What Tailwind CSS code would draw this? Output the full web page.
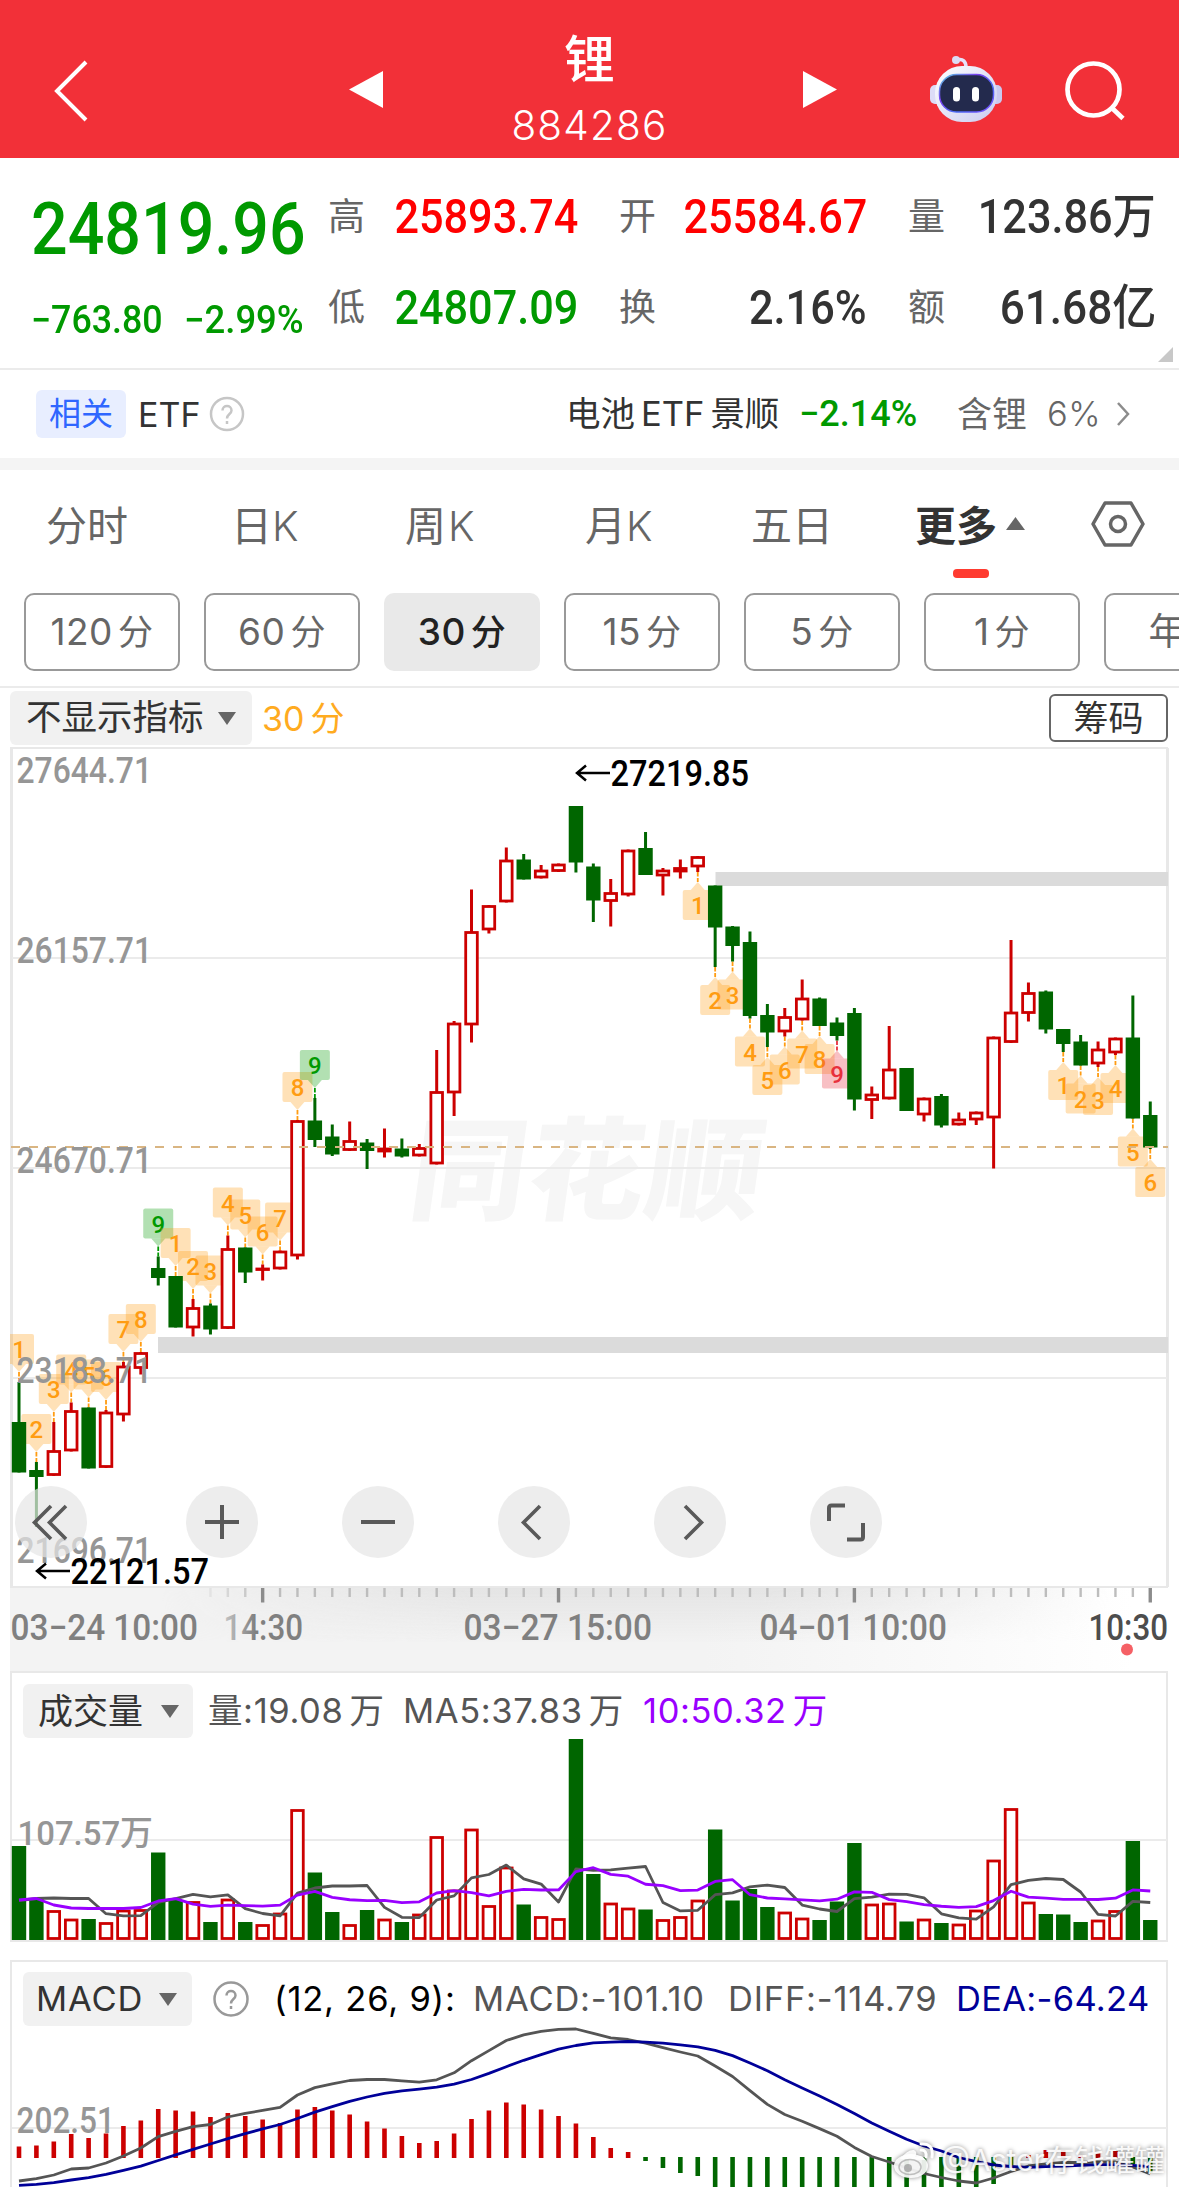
<!DOCTYPE html>
<html lang="zh-CN">

<head>
    <meta charset="UTF-8">
    <meta name="viewport" content="width=device-width, initial-scale=1.0">
    <title>锂 884286</title>
    <script src="https://cdn.jsdelivr.net/npm/@tailwindcss/browser@4"></script>
    <style>
        body {
            font-family: Inter, 'Noto Sans CJK SC', sans-serif;
        }

        .din {
            font-family: Roboto, 'Noto Sans CJK SC', sans-serif;
        }
    </style>
</head>

<body class="w-[1179px] h-[2187px] overflow-hidden bg-white text-[#333] relative">
    <header class="h-[158px] bg-[#f23038] text-white grid grid-cols-[349px_34px_413px_7px_34px_342px]">
        <svg class="w-[120px] h-[158px]" viewBox="0 0 120 158" fill="none" stroke="white" stroke-width="4">
            <path d="M86 62L57 91l29 29" />
        </svg>
        <svg class="w-[34px] h-[158px]" viewBox="0 0 34 158" fill="white">
            <path d="M0 89.500L34 71v37z" />
        </svg>
        <div class="flex flex-col items-center">
            <h1 class="mt-[25px] text-[51px] leading-[70px] font-medium">锂</h1>
            <p class="mt-[6px] text-[40.500px] leading-[50px] font-light tracking-[1.2px]">884286</p>
        </div>
        <span></span>
        <svg class="w-[34px] h-[158px]" viewBox="0 0 34 158" fill="white">
            <path d="M34 89.500L0 71v37z" />
        </svg>
        <svg class="w-[342px] h-[158px]" viewBox="837 0 342 158" fill="none">
            <defs>
                <linearGradient id="shell" x1="0" y1="0" x2="1" y2="1">
                    <stop offset="0" stop-color="#ffffff" />
                    <stop offset="1" stop-color="#c9cbf0" />
                </linearGradient>
                <linearGradient id="rim" x1="0" y1="0" x2="1" y2="1">
                    <stop offset="0" stop-color="#58d6e0" />
                    <stop offset=".35" stop-color="#7a3ff0" />
                    <stop offset=".65" stop-color="#4a6cf5" />
                    <stop offset="1" stop-color="#7b46ff" />
                </linearGradient>
            </defs>
            <path d="M957 60c6-2 9 2 9 7" stroke="#e6e2fa" stroke-width="3.500" />
            <circle cx="956" cy="60" r="4" fill="#dcdcf5" />
            <rect x="930" y="85" width="12" height="19" rx="5" fill="#dcdcf7" />
            <rect x="990" y="85" width="12" height="19" rx="5" fill="#c9c9f0" />
            <rect x="935" y="66" width="62" height="56" rx="27" fill="url(#shell)" />
            <rect x="939.500" y="74.500" width="54" height="37.500" rx="17" fill="#232a4d" stroke="url(#rim)" stroke-width="1.500" />
            <rect x="953" y="87" width="7" height="14.500" rx="3.500" fill="white" />
            <rect x="972" y="87" width="7" height="14.500" rx="3.500" fill="white" />
            <circle cx="1093.500" cy="89.500" r="26" stroke="white" stroke-width="4.700" />
            <path d="M1113 109l10 9.500" stroke="white" stroke-width="4.700" />
        </svg>
    </header>

    <section class="h-[212px] border-b-2 border-[#ebebeb] flex relative">
        <div class="w-[328px] pl-[31px]">
            <div class="din mt-[29px] text-[72.500px] leading-[85px] font-medium text-[#009900] origin-left scale-x-[0.890] w-max">24819.96</div>
            <div class="din mt-[26px] text-[38px] leading-[44px] text-[#009900] font-medium flex">
                <span class="w-[153px]"><span class="block w-max origin-left scale-x-[0.940]">−763.80</span></span>
                <span class="w-max origin-left scale-x-[0.960]">−2.99%</span>
            </div>
        </div>
        <div class="w-[830px] grid grid-cols-[250px_41px_248px_41px_248px] grid-rows-[91px_91px] pt-[13px] text-[37px] text-[#666] items-center">
            <div class="flex justify-between items-center"><span>高</span><span class="din text-[48px] font-medium text-[#ff0000] origin-right scale-x-[0.900]">25893.74</span></div>
            <span></span>
            <div class="flex justify-between items-center"><span>开</span><span class="din text-[48px] font-medium text-[#ff0000] origin-right scale-x-[0.900]">25584.67</span></div>
            <span></span>
            <div class="flex justify-between items-center"><span>量</span><span class="din text-[48px] font-medium text-[#333] origin-right scale-x-[0.900]">123.86万</span></div>
            <div class="flex justify-between items-center"><span>低</span><span class="din text-[48px] font-medium text-[#009900] origin-right scale-x-[0.900]">24807.09</span></div>
            <span></span>
            <div class="flex justify-between items-center"><span>换</span><span class="din text-[48px] font-medium text-[#333] origin-right scale-x-[0.900]">2.16%</span></div>
            <span></span>
            <div class="flex justify-between items-center"><span>额</span><span class="din text-[48px] font-medium text-[#333] origin-right scale-x-[0.920]">61.68亿</span></div>
        </div>
        <svg class="absolute right-[6px] bottom-[6px] w-[15px] h-[15px]" viewBox="0 0 15 15" fill="#c8c8c8">
            <path d="M15 0v15H0z" />
        </svg>
    </section>

    <section class="h-[100px] border-b-12 border-[#f4f4f4] flex items-center pl-[36px] text-[34px] whitespace-nowrap">
        <span class="w-[90px] h-[48px] leading-[48px] rounded-[6px] bg-[#e8eeff] text-[#2f66ff] text-[32px] text-center">相关</span>
        <span class="ml-[12px] w-[71px]">ETF</span>
        <svg class="w-[36px] h-[36px]" viewBox="0 0 36 36" fill="none" stroke="#c6c6c6" stroke-width="2.500">
            <circle cx="18" cy="18" r="16" />
            <path d="M13.500 14.500c0-6 9-6 9 0 0 3.500-4.500 3.500-4.500 8M18 25v3" />
        </svg>
        <span class="ml-[321px] w-[233px] text-[34.500px]">电池<span class="mx-[6px]">ETF</span>景顺</span>
        <span class="din w-[158px] font-medium text-[#009900] text-[36px]">−2.14%</span>
        <span class="w-[90px] text-[#666] text-[35px]">含锂</span>
        <span class="w-[69px] text-[#666] font-light text-[34.500px] tracking-[0.5px]">6%</span>
        <svg class="w-[16px] h-[28px]" viewBox="0 0 16 28" fill="none" stroke="#8c8c8c" stroke-width="2.500">
            <path d="M2 3l10 11L2 25" />
        </svg>
    </section>

    <nav class="h-[123px] pl-[46px] text-[41px] text-[#666] grid grid-cols-[185px_174px_180px_166px_164px_91px_1fr] relative">
        <span class="mt-[26px]">分时</span>
        <span class="mt-[26px]">日<span class="font-light">K</span></span>
        <span class="mt-[26px]">周<span class="ml-[2px] font-light">K</span></span>
        <span class="mt-[26px]">月<span class="font-light">K</span></span>
        <span class="mt-[26px]">五日</span>
        <span class="mt-[26px] font-bold text-[#333]">更多</span>
        <svg class="w-[173px] h-[123px]" viewBox="1006 470 173 123" fill="none">
            <path d="M1015.500 517l9.500 13h-19z" fill="#666" />
            <path d="M1105 503h26l12 21-12 21h-26l-12-21z" stroke="#666" stroke-width="3.500" stroke-linejoin="round" />
            <circle cx="1118" cy="524" r="7.500" stroke="#666" stroke-width="3.500" />
        </svg>
        <span class="absolute left-[953px] top-[99px] w-[36px] h-[9px] rounded-[4px] bg-[#ff3b30]"></span>
    </nav>

    <div class="h-[95px] border-b-2 border-[#ebebeb] pl-[24px] flex gap-[24px] overflow-hidden text-[37px] tracking-[0.5px] text-[#666] *:shrink-0 *:w-[156px] *:h-[78px] *:rounded-[10px] *:flex *:items-center *:justify-center *:gap-[5px]">
        <button class="border-2 border-[#999]">120<span class="text-[35px]">分</span></button>
        <button class="border-2 border-[#999]">60<span class="text-[35px]">分</span></button>
        <button class="bg-[#e9e9e9] text-[#222] font-medium">30<span class="text-[35px]">分</span></button>
        <button class="border-2 border-[#999]">15<span class="text-[35px]">分</span></button>
        <button class="border-2 border-[#999]">5<span class="text-[35px]">分</span></button>
        <button class="border-2 border-[#999]">1<span class="text-[35px]">分</span></button>
        <button class="border-2 border-[#999] pr-[4px]">年K</button>
    </div>

    <div class="h-[59px] pt-[3px] pl-[10px] pr-[11px] flex items-start">
        <div class="w-[242px] h-[54px] rounded-[6px] bg-[#f1f1f1] flex items-center pl-[16px] text-[35.500px]">
            不显示指标
            <svg class="ml-[14px] w-[18px] h-[13px]" viewBox="0 0 18 13" fill="#666"><path d="M0 0h18L9 13z" /></svg>
        </div>
        <div class="ml-[10px] h-[54px] flex items-center gap-[6px] text-[34px] text-[#ffab1f]">30<span>分</span></div>
        <button class="ml-auto mt-[3px] w-[119px] h-[48px] rounded-[6px] border-2 border-[#666] text-[35px] leading-[42px]">筹码</button>
    </div>

    <!-- K line -->
    <main class="relative h-[924px]">
        <svg id="kline" class="block w-[1179px] h-[924px]" viewBox="0 747 1179 924"></svg>
        <div class="absolute left-[15px] top-[739px] flex gap-[84px] *:w-[72px] *:h-[72px] *:rounded-full *:bg-[#e5e5e5]/70">
            <button class="mr-[15px]"><svg viewBox="0 0 72 72" fill="none" stroke="#595959" stroke-width="3.600"><path d="M36 20L19.500 36.500 36 53M51 20L34.500 36.500 51 53" /></svg></button>
            <button><svg viewBox="0 0 72 72" stroke="#595959" stroke-width="4"><path d="M19 36h34M36 19v34" /></svg></button>
            <button><svg viewBox="0 0 72 72" stroke="#595959" stroke-width="4"><path d="M19 36h34" /></svg></button>
            <button><svg viewBox="0 0 72 72" fill="none" stroke="#595959" stroke-width="3.600"><path d="M42 20L25.500 36.500 42 53" /></svg></button>
            <button><svg viewBox="0 0 72 72" fill="none" stroke="#595959" stroke-width="3.600"><path d="M31 20l16.500 16.500L31 53" /></svg></button>
            <button><svg viewBox="0 0 72 72" fill="none" stroke="#595959" stroke-width="4"><path d="M19 35V22q0-2.500 2.500-2.500H35M53 37v14q0 2.500-2.500 2.500H37" /></svg></button>
        </div>
    </main>

    <!-- 成交量 -->
    <section class="relative ml-[10px] w-[1158px] h-[271px] border-2 border-[#e8e8e8]">
        <svg id="volume" class="absolute -left-[12px] top-0 w-[1179px] h-[269px]" viewBox="0 1673 1179 269"></svg>
        <div class="relative pt-[11px] pl-[11px] flex items-center text-[34.500px] tracking-[0.6px] text-[#555] whitespace-nowrap">
            <div class="w-[170px] h-[54px] rounded-[6px] bg-[#f1f1f1] text-[#333] flex items-center pl-[15px] text-[35px] tracking-normal">
                成交量
                <svg class="ml-[18px] w-[18px] h-[13px]" viewBox="0 0 18 13" fill="#666"><path d="M0 0h18L9 13z" /></svg>
            </div>
            <span class="ml-[15px] w-[195px]">量:19.08<span class="ml-[6px]">万</span></span>
            <span class="w-[240px]">MA5:37.83<span class="ml-[6px]">万</span></span>
            <span class="text-[#9900ff]">10:50.32<span class="ml-[6px]">万</span></span>
        </div>
    </section>

    <!-- MACD -->
    <section class="relative mt-[18px] ml-[10px] w-[1158px] h-[240px] border-2 border-[#e8e8e8]">
        <svg id="macd" class="absolute -left-[12px] -top-[2px] w-[1179px] h-[227px]" viewBox="0 1960 1179 227"></svg>
        <div class="relative pt-[10px] pl-[11px] flex items-center text-[34.500px] tracking-[0.8px] text-[#555] whitespace-nowrap">
            <div class="w-[169px] h-[54px] rounded-[6px] bg-[#f1f1f1] text-[#333] flex items-center pl-[13px]">
                <span class="w-[104px]">MACD</span>
                <svg class="ml-[19px] w-[18px] h-[13px]" viewBox="0 0 18 13" fill="#666"><path d="M0 0h18L9 13z" /></svg>
            </div>
            <svg class="ml-[21px] w-[36px] h-[36px]" viewBox="0 0 36 36" fill="none" stroke="#999" stroke-width="2.500">
                <circle cx="18" cy="18" r="16.500" />
                <path d="M13.500 14.500c0-6 9-6 9 0 0 3.500-4.500 3.500-4.500 8M18 25v3" />
            </svg>
            <span class="ml-[25px] w-[199px] text-black">(12, 26, 9):</span>
            <span class="w-[255px]">MACD:-101.10</span>
            <span class="w-[228px]">DIFF:-114.79</span>
            <span class="text-[#000099] tracking-[0.3px]">DEA:-64.24</span>
        </div>
    </section>

    <div class="absolute left-[892px] top-[2138px] flex items-center text-white/90 text-[30px] whitespace-nowrap [text-shadow:0_0_4px_rgba(0,0,0,0.5)]">
        <svg class="w-[46px] h-[40px] drop-shadow-[0_0_2px_rgba(0,0,0,0.5)]" viewBox="0 0 46 40" fill="none">
            <ellipse cx="19" cy="25" rx="17" ry="12" fill="white" fill-opacity=".9" />
            <path d="M8 18q8-10 14-9 4 2 1 7 8-3 10 3z" fill="white" fill-opacity=".9" />
            <ellipse cx="18" cy="26" rx="11" ry="7.500" stroke="#999" stroke-opacity=".6" stroke-width="1.500" />
            <circle cx="16" cy="27" r="4" fill="#888" fill-opacity=".6" />
            <path d="M29 3q13-1 11 13M29 9q6 0 5 7" stroke="white" stroke-width="3" stroke-linecap="round" />
        </svg>
        <span class="ml-[3px]">@Aster存钱罐罐</span>
    </div>

    <script>
        const RED = '#cc0000';
        const GREEN = '#006600';
        const GRID = '#ebebeb';
        const DIN = "Roboto, 'Noto Sans CJK SC', sans-serif";
        const px = i => 19 + 17.404 * i;

        // [up, high, body top, body bottom, low]
        const candles = [
            [0, 1382, 1422, 1472.5, 1472.5], [0, 1462, 1470, 1477, 1527], [1, 1422, 1450, 1476, 1476], [1, 1402.5, 1410, 1451.5, 1451.5],
            [0, 1407.5, 1407.5, 1468.5, 1468.5], [1, 1410, 1411.5, 1468, 1468], [1, 1362, 1365.5, 1415.5, 1421.5], [1, 1352, 1352, 1369, 1374.5],
            [0, 1256.5, 1268, 1278, 1285.5], [0, 1276, 1276, 1327.5, 1327.5], [1, 1299, 1307, 1328.5, 1336.5], [0, 1303.5, 1305.5, 1329.5, 1334.5],
            [1, 1235.5, 1248, 1329, 1329], [0, 1247.5, 1247.5, 1272.5, 1283], [1, 1264.5, 1267.5, 1271, 1280.5], [1, 1250.5, 1250.5, 1269.5, 1269.5],
            [1, 1120, 1120, 1256.5, 1259.5], [0, 1098, 1120.5, 1140, 1147], [0, 1124.5, 1136.5, 1154.5, 1156], [1, 1121.5, 1140, 1151, 1151],
            [0, 1139, 1142.5, 1151, 1169], [1, 1128.5, 1147.5, 1152.5, 1157.5], [0, 1138.5, 1148.5, 1156.5, 1157.5], [1, 1144, 1147, 1156.5, 1156.5],
            [1, 1050, 1091, 1164.5, 1164.5], [1, 1021, 1022.5, 1093.5, 1116], [1, 889.5, 931, 1025.5, 1042.5], [1, 905, 905, 930.5, 933.5],
            [1, 847.5, 859.5, 902.5, 902.5], [0, 854, 859.5, 879.5, 879.5], [1, 865, 869.5, 878.5, 878.5], [1, 863.5, 863.5, 872, 872],
            [0, 806, 806, 862.5, 872.5], [0, 863.5, 866.5, 900.5, 922], [1, 879, 892, 902, 926.5], [1, 849.5, 849.5, 895.5, 896.5],
            [0, 832, 848, 875, 875], [1, 868, 869.5, 876.5, 895.5], [1, 859.5, 867, 872.5, 878.5], [1, 856, 856, 867.5, 872],
            [0, 885.5, 885.5, 927.5, 967], [0, 926, 926.5, 946, 961.5], [0, 931.5, 942, 1016, 1018.5], [0, 1004, 1015, 1032.5, 1047],
            [1, 1008, 1016, 1032.5, 1036.5], [1, 979.5, 997.5, 1020.5, 1020.5], [0, 997.5, 998.5, 1026, 1026], [0, 1017.5, 1022.5, 1036, 1040.5],
            [0, 1008, 1013, 1099.5, 1110.5], [1, 1086.5, 1093.5, 1101, 1119], [1, 1026, 1068.5, 1099.5, 1099.5], [0, 1068, 1068, 1111, 1111],
            [1, 1097.5, 1097.5, 1115.5, 1121.5], [0, 1094, 1096, 1125.5, 1127.5], [1, 1112.5, 1118.5, 1125.5, 1125.5], [1, 1111.5, 1111.5, 1120.5, 1125],
            [1, 1036.5, 1036.5, 1118.5, 1168.5], [1, 940, 1011.5, 1043, 1043], [1, 982.5, 992, 1014, 1021.5], [0, 990.5, 991.5, 1029.5, 1033.5],
            [0, 1029, 1029, 1044, 1052], [0, 1035, 1041.5, 1065.5, 1065.5], [1, 1041.5, 1048.5, 1064.5, 1067], [1, 1037.5, 1037.5, 1053.5, 1055],
            [0, 995.5, 1037.5, 1118.5, 1118.5], [0, 1101.5, 1115, 1147.5, 1149]
        ];

        const volumes = [94, 41, 30, 21.5, 21, 18, 30.5, 31, 87.5, 40, 39, 18, 41.5, 18, 16, 27.5, 131, 67.5, 28, 16, 30, 21.5, 18, 26.5,
            104, 50.5, 111.5, 35, 73.5, 35.5, 24, 22, 201, 66, 37.5, 32.5, 30.5, 21, 24, 40.5, 110.5, 39.5, 51, 33, 28.5, 22.5, 20, 38.5,
            97, 36.5, 37.5, 18.5, 21.5, 17, 16.5, 30.5, 80.5, 132, 38.5, 26, 25.5, 18, 20.5, 30, 99, 20];

        const macd = [11.5, 12.5, 16.5, 24, 20, 24.5, 32, 37.5, 49, 47.5, 46.5, 41, 45, 42, 38.5, 35, 48.5, 51, 47.5, 43.5, 36.5, 29.5, 22, 15,
            17, 24.5, 39, 47.5, 55.5, 53.5, 48.5, 42, 34.5, 21, 10, 6, -4, -11, -16, -19, -40, -40, -40, -40, -40, -40, -40, -40,
            -40, -40, -40, -40, -40, -40, -40, -40, -27, -11, 3, 8, 8, 3, 5, 7, -7, -16];

        const diff = [221, 218.7, 215, 209, 208, 203, 196, 188, 176.6, 171.3, 166.6, 164.5, 157, 153.4, 150.4, 147.4, 135, 127.6, 123.9, 120.5,
            119.5, 119.5, 120.8, 122.2, 119.8, 112.8, 100.7, 90.6, 80.5, 74.8, 71.4, 69.4, 69, 73.4, 77.8, 79.5, 83.2, 87.6, 92, 96,
            106, 116.5, 130.6, 144.4, 154.5, 161.2, 168.6, 176.3, 187.4, 196.5, 202, 208, 213.5, 217.5, 221, 223, 218, 211.5, 206, 204,
            202.5, 202.5, 202, 202, 207, 214];

        const dea = [225.4, 224.4, 222.7, 220, 217.6, 214.3, 210.3, 206.2, 200.5, 194.8, 189.4, 184, 178.7, 173.6, 168.9, 164.5, 158.5, 152.1,
            146.7, 141.3, 137, 133.3, 130.9, 129.2, 127.2, 124.2, 119.5, 113.4, 106.7, 100.3, 94.6, 89.2, 85.5, 82.9, 82.2, 81.5, 82.2,
            83.2, 84.9, 86.9, 90.3, 95.6, 103, 110.8, 119.8, 127.9, 136, 144.4, 153.4, 162.9, 171.3, 179.3, 186, 191, 197.5, 201.7, 205,
            206.5, 207.3, 206.7, 206, 205.3, 204.7, 204.7, 205.3, 206.7];

        const rect = (x, y, w, h, fill, extra = '') => `<rect x="${x}" y="${y}" width="${w}" height="${h}" fill="${fill}" ${extra}/>`;

        // condensed number, w is the drawn width
        const num = (x, y, w, text, fill, extra = '') =>
            `<text x="${x - 1.5}" y="${y}" textLength="${w + 3.5}" lengthAdjust="spacingAndGlyphs" font-family="${DIN}" font-size="36" font-weight="500" fill="${fill}" ${extra}>${text}</text>`;

        const line = (ys, stroke, width) =>
            `<polyline fill="none" stroke="${stroke}" stroke-width="${width}" stroke-linejoin="round" points="${ys.map((y, i) => px(i) + ',' + y).join(' ')}"/>`;

        function bar(i, top, bottom) {
            if (candles[i][0]) {
                return rect(px(i) - 5.8, top + 1.5, 11.6, Math.max(bottom - top - 3, 0.5), 'white', `stroke="${RED}" stroke-width="2.8"`);
            }
            return rect(px(i) - 7.2, top, 14.4, bottom - top, GREEN);
        }

        // nine-turn marker
        function mark(i, n, below) {
            const x = px(i);
            const y = below ? candles[i][4] + 18 : candles[i][1] - 48;
            const fill = n < 9 ? '#ff9c12' : below ? '#e8303c' : '#009900';
            const tip = below ? `M${x - 7} ${y}l7 -8 7 8z` : `M${x - 7} ${y + 30}l7 8 7 -8z`;
            const from = below ? y - 18 : y + 38;
            return `<g fill="${fill}"><g fill-opacity=".3"><rect x="${x - 15}" y="${y}" width="30" height="30" rx="2"/><path d="${tip}"/></g>
                <path d="M${x} ${from}v10" stroke="${fill}" stroke-width="1.8" stroke-dasharray="4.5 1.5"/>
                <text x="${x}" y="${y + 24}" text-anchor="middle" font-family="${DIN}" font-size="24" font-weight="500">${n}</text></g>`;
        }

        function drawKline() {
            let s = `<defs>
                <clipPath id="plot"><rect x="10" y="747" width="1160" height="842"/></clipPath>
                <linearGradient id="axis" x1="0" x2="1"><stop offset="0" stop-color="#f3f3f3"/><stop offset=".6" stop-color="#f3f3f3"/><stop offset=".97" stop-color="#fff"/></linearGradient>
                <linearGradient id="shade" x1="0" x2="0" y1="0" y2="1"><stop offset="0" stop-color="#e4e4e4"/><stop offset="1" stop-color="#e4e4e4" stop-opacity="0"/></linearGradient>
                <linearGradient id="sides" x1="0" x2="1"><stop offset=".13" stop-color="#000"/><stop offset=".4" stop-color="#fff"/><stop offset=".65" stop-color="#fff"/><stop offset=".95" stop-color="#000"/></linearGradient>
                <linearGradient id="early" gradientUnits="userSpaceOnUse" x1="222" x2="270"><stop offset="0" stop-color="#c8c8c8"/><stop offset=".7" stop-color="#808080"/></linearGradient>
                <mask id="fade"><rect x="10" y="1588" width="1158" height="60" fill="url(#sides)"/></mask>
            </defs>`;
            s += rect(10, 1588, 1158, 83, 'url(#axis)');
            s += rect(10, 1588, 1158, 55, 'url(#shade)', 'mask="url(#fade)"');
            s += `<g fill="none" stroke="#e8e8e8" stroke-width="2"><path d="M10 748H1168M10 1587H1168"/><path d="M11.500 748V1587M1167.500 748V1587" stroke-width="3"/></g>`;
            s += `<text x="0" y="0" transform="translate(406 1211) skewX(-8) scale(1 .96)" textLength="352" font-family="'Noto Sans CJK SC'" font-weight="900" font-size="116" fill="#f6f6f6">同花顺</text>`;
            [958, 1168, 1378].forEach(y => s += rect(12, y - 1, 1155, 2, GRID));
            s += rect(715.5, 872, 452.5, 14, '#dbdbdb') + rect(158, 1337, 1010, 16, '#dbdbdb');

            s += '<g clip-path="url(#plot)">';
            for (let i = 0; i < 18; i++) s += mark(i, i % 9 + 1, false);
            for (let i = 39; i < 48; i++) s += mark(i, i - 38, true);
            for (let i = 60; i < 66; i++) s += mark(i, i - 59, true);
            s += '</g>';

            candles.forEach(([up, high, top, bottom, low], i) => {
                s += rect(px(i) - 1.5, high, 3, low - high, up ? RED : GREEN) + bar(i, top, bottom);
            });
            s += `<path d="M11 1147H1168" stroke="#d9b582" stroke-width="1.800" stroke-dasharray="9 9"/>`;

            s += num(18, 783, 132, '27644.71', '#969696') + num(18, 963, 132, '26157.71', '#969696');
            s += num(18, 1173, 132, '24670.71', '#969696') + num(18, 1383, 132, '23183.71', '#969696');
            s += num(18, 1563, 132, '21696.71', '#969696');
            s += `<g fill="none" stroke="#000" stroke-width="2.500"><path d="M610 773H577M586 765.500l-9 7.500 9 7.500"/><path d="M70 1571H37M46 1563.500l-9 7.500 9 7.500"/></g>`;
            s += num(612, 786, 135, '27219.85', '#000') + num(72, 1584, 135, '22121.57', '#000');

            for (let i = 11; i < 66; i++) {
                const major = i % 17 === 14;
                s += rect(px(i) - (major ? 1.7 : 1.2), 1588, major ? 3.4 : 2.4, major ? 14.5 : 9, major ? '#8c8c8c' : '#bdbdbd', `opacity="${Math.min(1, (i - 10) / 4)}"`);
            }
            s += num(12, 1640, 184, '03−24 10:00', '#808080') + num(225, 1640, 76, '14:30', 'url(#early)');
            s += num(465, 1640, 185, '03−27 15:00', '#808080') + num(761, 1640, 184, '04−01 10:00', '#808080');
            s += num(1090, 1640, 76, '10:30', '#4d4d4d');
            s += '<circle cx="1127" cy="1649.500" r="6" fill="#f56065"/>';
            document.getElementById('kline').innerHTML = s;
        }

        // moving average, the first values come from bars left of the window
        const average = (n, seed) => volumes.map((v, i) =>
            1940 - (i < seed.length ? seed[i] : volumes.slice(i - n + 1, i + 1).reduce((a, b) => a + b) / n));

        function drawVolume() {
            let s = rect(12, 1839, 1155, 2, GRID) + num(19, 1845, 132, '107.57万', '#969696', 'style="font-size:34px"');
            volumes.forEach((v, i) => s += bar(i, 1940 - v, 1940));
            s += line(average(5, [39.5, 41.5, 42, 41.5]), '#555', 2.8);
            s += line(average(10, [40, 41.5, 35, 32, 31.5, 31.5, 31.5, 32.5, 39]), '#9900ff', 2.8);
            document.getElementById('volume').innerHTML = s;
        }

        function drawMacd() {
            let s = rect(12, 2127, 1155, 2, GRID) + num(18, 2133, 95, '202.51', '#969696');
            macd.forEach((v, i) => s += v > 0 ? rect(px(i) - 2.3, 2158 - v, 4.6, v, RED) : rect(px(i) - 2.3, 2157, 4.6, -v, GREEN));
            s += line(diff.map(v => v + 1960), '#555', 2.8) + line(dea.map(v => v + 1960), '#000099', 2.8);
            document.getElementById('macd').innerHTML = s;
        }

        drawKline();
        drawVolume();
        drawMacd();
    </script>
</body>

</html>
